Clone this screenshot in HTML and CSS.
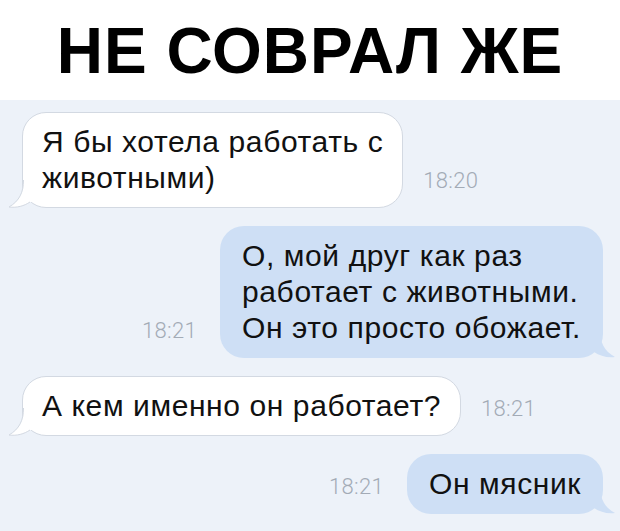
FILE: index.html
```html
<!DOCTYPE html>
<html lang="ru">
<head>
<meta charset="utf-8">
<link rel="stylesheet" href="styles.css">
</head>
<body>
<header class="title">НЕ СОВРАЛ ЖЕ</header>
<main class="chat">
  <div class="row in">
    <div class="bubble white">
      Я бы хотела работать с<br>животными)
      <svg class="tail tail-left" width="24" height="28" viewBox="0 0 24 28"><path d="M16 0 C16 12 12 21 1 27 C 9 28 16 26 22 22 L24 22 L24 0 Z" fill="#fff"/><path d="M15.5 0 C15.5 12 11.5 21 1 27 C 9 28 16 26 22 22" fill="none" stroke="#d3d9e2" stroke-width="1"/></svg>
    </div>
    <span class="time">18:20</span>
  </div>
  <div class="row out">
    <span class="time">18:21</span>
    <div class="bubble blue">
      О, мой друг как раз<br>работает с животными.<br>Он это просто обожает.
      <svg class="tail tail-right" width="24" height="28" viewBox="0 0 24 28"><path d="M8 0 C8 12 12 21 23 27 C 15 28 8 26 2 22 L0 22 L0 0 Z" fill="#cedff5"/></svg>
    </div>
  </div>
  <div class="row in">
    <div class="bubble white">
      А кем именно он работает?
      <svg class="tail tail-left" width="24" height="28" viewBox="0 0 24 28"><path d="M16 0 C16 12 12 21 1 27 C 9 28 16 26 22 22 L24 22 L24 0 Z" fill="#fff"/><path d="M15.5 0 C15.5 12 11.5 21 1 27 C 9 28 16 26 22 22" fill="none" stroke="#d3d9e2" stroke-width="1"/></svg>
    </div>
    <span class="time">18:21</span>
  </div>
  <div class="row out">
    <span class="time">18:21</span>
    <div class="bubble blue">
      Он мясник
      <svg class="tail tail-right" width="24" height="28" viewBox="0 0 24 28"><path d="M8 0 C8 12 12 21 23 27 C 15 28 8 26 2 22 L0 22 L0 0 Z" fill="#cedff5"/></svg>
    </div>
  </div>
</main>
</body>
</html>
```

FILE: styles.css
```css
html, body {
  margin: 0;
  padding: 0;
}
body {
  width: 620px;
  height: 531px;
  overflow: hidden;
  background: #edf2f9;
  font-family: "Liberation Sans", Arial, sans-serif;
}
.title {
  height: 100px;
  background: #fff;
  display: flex;
  align-items: center;
  justify-content: center;
  font-family: "Liberation Sans", Arial, sans-serif;
  font-weight: bold;
  font-size: 64px;
  color: #000;
  letter-spacing: 1px;
  padding-top: 2px;
  box-sizing: border-box;
}
.chat {
  display: flex;
  flex-direction: column;
  gap: 18px;
  padding: 12px 17px 0 22px;
}
.row {
  display: flex;
  align-items: flex-end;
}
.row.out {
  justify-content: flex-end;
}
.row.in .time {
  margin-left: 20px;
}
.row.out .time {
  margin-right: 23px;
}
.bubble {
  position: relative;
  font-size: 30px;
  letter-spacing: 0.6px;
  line-height: 36px;
  color: #111;
  padding: 12px 20px;
  border-radius: 24px;
  box-sizing: border-box;
}
.bubble.white {
  background: #fff;
  border: 1px solid #d3d9e2;
  padding: 11px 19px;
}
.bubble.blue {
  background: #cedff5;
  padding: 12px 22px;
}
.time {
  font-family: Roboto, "Liberation Sans", sans-serif;
  font-weight: 300;
  font-size: 22px;
  letter-spacing: 0.3px;
  line-height: 36px;
  color: #a3abb6;
  margin-bottom: 9px;
}
.tail {
  position: absolute;
  bottom: -1px;
}
.tail-left {
  left: -15px;
}
.tail-right {
  right: -13px;
  bottom: 0;
}
```
